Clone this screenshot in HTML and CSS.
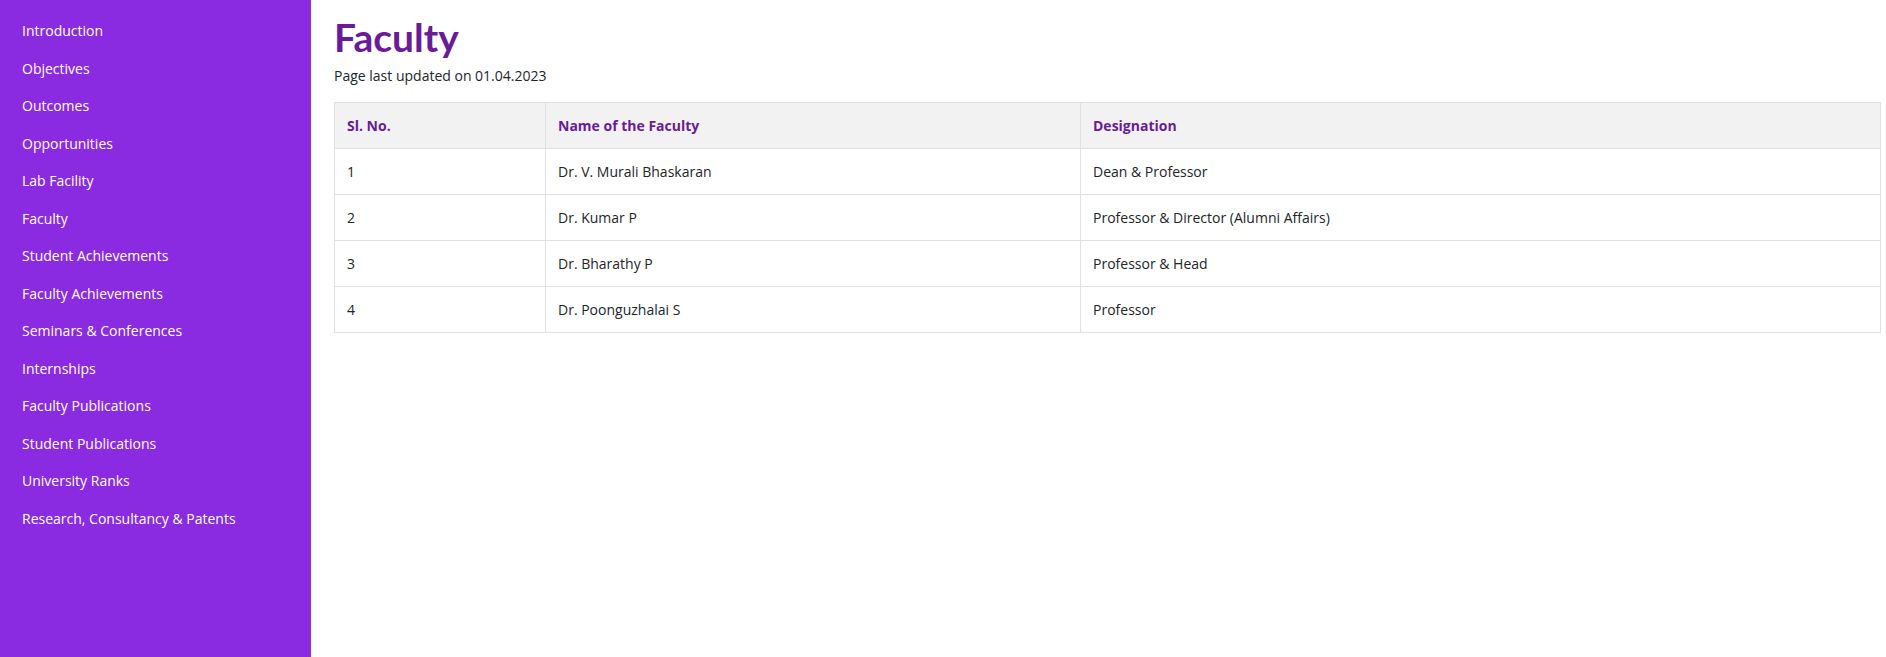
FILE: index.html
```html
<!DOCTYPE html>
<html lang="en">
<head>
<meta charset="utf-8">
<title>Faculty</title>
<link rel="stylesheet" href="styles.css">
</head>
<body>
<div class="layout">
  <nav class="sidebar">
    <ul class="nav">
      <li><a href="#">Introduction</a></li>
      <li><a href="#">Objectives</a></li>
      <li><a href="#">Outcomes</a></li>
      <li><a href="#">Opportunities</a></li>
      <li><a href="#">Lab Facility</a></li>
      <li><a href="#">Faculty</a></li>
      <li><a href="#">Student Achievements</a></li>
      <li><a href="#">Faculty Achievements</a></li>
      <li><a href="#">Seminars &amp; Conferences</a></li>
      <li><a href="#">Internships</a></li>
      <li><a href="#">Faculty Publications</a></li>
      <li><a href="#">Student Publications</a></li>
      <li><a href="#">University Ranks</a></li>
      <li><a href="#">Research, Consultancy &amp; Patents</a></li>
    </ul>
  </nav>
  <main class="content">
    <h1 class="title">Faculty</h1>
    <p class="updated">Page last updated on 01.04.2023</p>
    <table class="faculty-table">
      <thead>
        <tr>
          <th class="col-no">Sl. No.</th>
          <th class="col-name">Name of the Faculty</th>
          <th>Designation</th>
        </tr>
      </thead>
      <tbody>
        <tr><td>1</td><td>Dr. V. Murali Bhaskaran</td><td>Dean &amp; Professor</td></tr>
        <tr><td>2</td><td>Dr. Kumar P</td><td>Professor &amp; Director (Alumni Affairs)</td></tr>
        <tr><td>3</td><td>Dr. Bharathy P</td><td>Professor &amp; Head</td></tr>
        <tr><td>4</td><td>Dr. Poonguzhalai S</td><td>Professor</td></tr>
      </tbody>
    </table>
  </main>
</div>
</body>
</html>
```

FILE: styles.css
```css
* { box-sizing: border-box; }

html, body {
  margin: 0;
  padding: 0;
  height: 100%;
}

body {
  font-family: "Open Sans", "Noto Sans", sans-serif;
  color: #212529;
  background: #ffffff;
}

.layout {
  display: flex;
  min-height: 100vh;
}

.sidebar {
  width: 311px;
  flex: 0 0 311px;
  background: #8a2be2;
  padding-top: 12px;
}

.nav {
  list-style: none;
  margin: 0;
  padding: 0;
}

.nav a {
  display: block;
  padding: 8px 22px;
  line-height: 21.5px;
  font-size: 14px;
  color: #ffffff;
  text-decoration: none;
}

.content {
  flex: 1;
  padding: 13px 5px 0 23px;
}

.title {
  margin: 0;
  font-family: "Lato", "Open Sans", sans-serif;
  font-size: 39px;
  line-height: 48px;
  font-weight: 700;
  color: #6a1b9a;
}

.updated {
  margin: 5px 0 16px 0;
  font-size: 14px;
  line-height: 20px;
}

.faculty-table {
  width: 100%;
  border-collapse: collapse;
  font-size: 14px;
}

.faculty-table th,
.faculty-table td {
  border: 1px solid #dee2e6;
  padding: 12px 12px;
  line-height: 21px;
  text-align: left;
}

.faculty-table th {
  background: #f2f2f2;
  color: #6a1b9a;
  font-weight: 700;
}

.col-no { width: 211px; }
.col-name { width: 535px; }
```
